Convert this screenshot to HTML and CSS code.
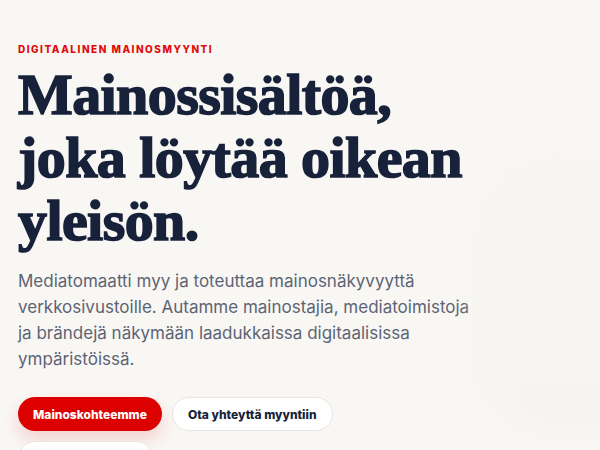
FILE: index.html
```html
<!DOCTYPE html>
<html lang="fi">
<head>
<meta charset="utf-8">
<title>Mediatomaatti</title>
<link rel="stylesheet" href="styles.css">
</head>
<body>
<main class="hero">
  <section class="hero-copy">
    <p class="eyebrow">Digitaalinen mainosmyynti</p>
    <h1 class="title">Mainossisältöä, joka löytää oikean yleisön.</h1>
    <p class="lead">Mediatomaatti myy ja toteuttaa mainosnäkyvyyttä verkkosivustoille. Autamme mainostajia, mediatoimistoja ja brändejä näkymään laadukkaissa digitaalisissa ympäristöissä.</p>
    <div class="actions">
      <a class="btn btn-primary" href="#">Mainoskohteemme</a>
      <a class="btn btn-secondary" href="#">Ota yhteyttä myyntiin</a>
      <a class="btn btn-secondary" href="#">Lataa mediakortti</a>
    </div>
  </section>
  <aside class="hero-visual">
    <div class="visual-card"></div>
  </aside>
</main>
</body>
</html>
```
FILE: styles.css
```css
html, body {
  margin: 0;
  padding: 0;
}
body {
  background: #f9f7f4;
  font-family: Inter, "Noto Sans", sans-serif;
  color: #17223a;
  overflow: hidden;
}
.hero {
  display: grid;
  grid-template-columns: 460px 1fr;
  gap: 12px;
  padding: 42px 0 0 18px;
}
.eyebrow {
  margin: 0;
  font-size: 10px;
  line-height: 14px;
  font-weight: 800;
  letter-spacing: 0.15em;
  text-transform: uppercase;
  color: #e00a0a;
}
.title {
  margin: 7px 0 0;
  font-family: "Liberation Serif", "DejaVu Serif", serif;
  font-weight: 700;
  font-size: 58px;
  line-height: 63px;
  letter-spacing: -0.01em;
  color: #17223a;
  -webkit-text-stroke: 1.6px #17223a;
}
.lead {
  margin: 16px 0 0;
  font-size: 17px;
  line-height: 26px;
  color: #5c6474;
}
.actions {
  display: flex;
  flex-wrap: wrap;
  gap: 10px;
  max-width: 440px;
  margin-top: 25px;
}
.btn {
  display: inline-flex;
  align-items: center;
  height: 34px;
  padding: 0 15px;
  border-radius: 999px;
  font-size: 12px;
  font-weight: 800;
  text-decoration: none;
  box-sizing: border-box;
}
.btn-primary {
  background: #dc0000;
  color: #fff;
  box-shadow: 0 8px 18px rgba(220, 0, 0, 0.16);
}
.btn-secondary {
  background: #fff;
  color: #17223a;
  border: 1px solid #e8e5e0;
}
.hero-visual {
  padding-top: 110px;
}
.visual-card {
  height: 240px;
  margin-right: -60px;
  border-radius: 48px;
  background: #f7f4f1;
  filter: blur(18px);
  box-shadow: 0 30px 40px rgba(20, 20, 20, 0.025);
}
```
